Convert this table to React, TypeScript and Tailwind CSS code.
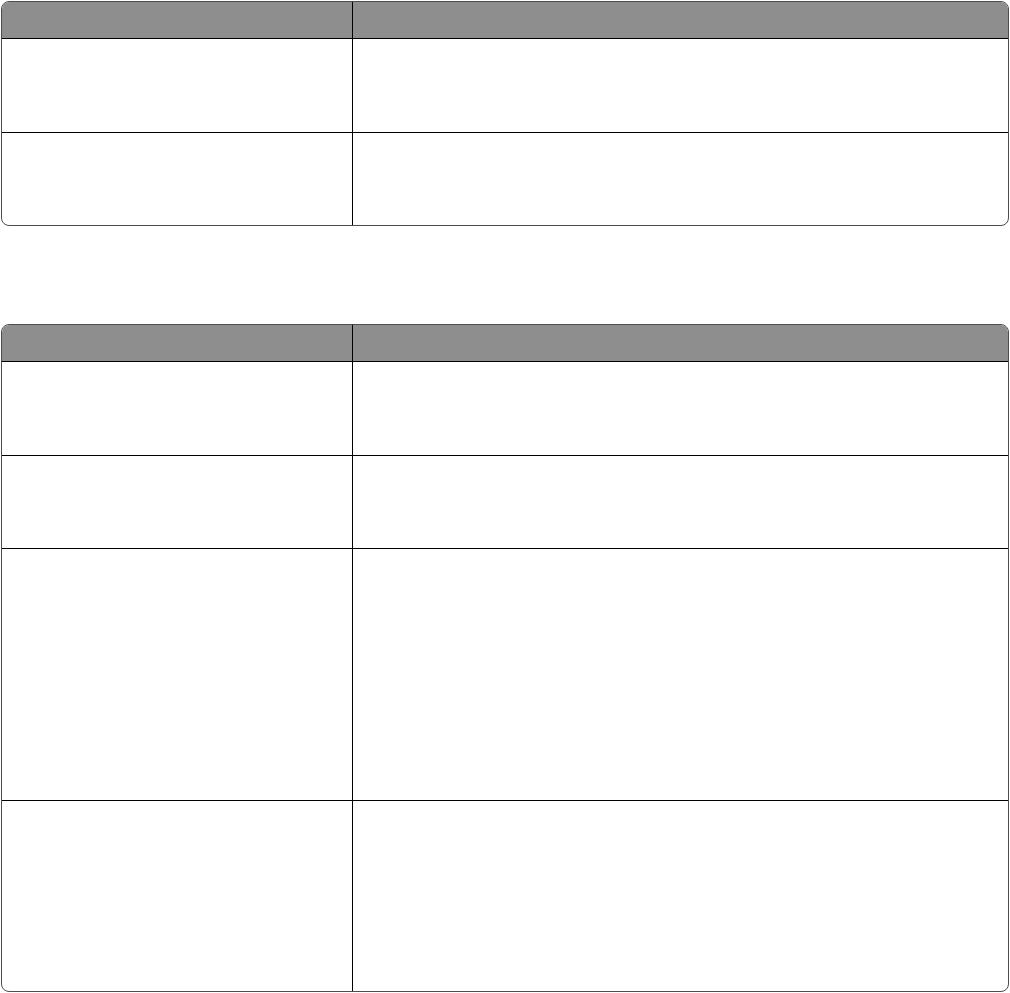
const table1 = [94, 92];
const table2 = [94, 93, 252, 190];

function Table({ rows }: { rows: number[] }) {
  return (
    <div className="w-[1008px] overflow-hidden rounded-[8px] border border-[#4d4d4d] bg-white">
      <div className="flex h-[37px] border-b border-black bg-[#8e8e8e]">
        <div className="w-[351px] border-r border-black" />
        <div className="flex-1" />
      </div>
      {rows.map((h, i) => (
        <div
          key={i}
          className={i < rows.length - 1 ? "flex border-b border-black" : "flex"}
          style={{ height: h }}
        >
          <div className="w-[351px] border-r border-black" />
          <div className="flex-1" />
        </div>
      ))}
    </div>
  );
}

export default function App() {
  return (
    <div className="min-h-[993px] bg-white pl-px pt-px">
      <Table rows={table1} />
      <div className="mt-[98px]">
        <Table rows={table2} />
      </div>
    </div>
  );
}
